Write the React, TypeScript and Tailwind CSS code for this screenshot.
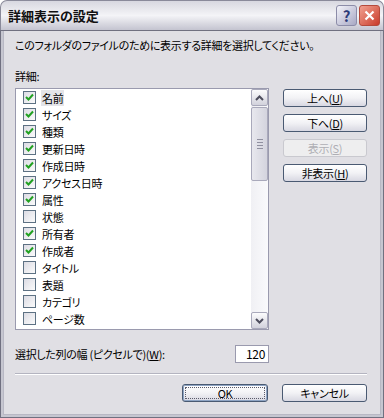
import React from "react";

const items: { label: string; checked: boolean }[] = [
  { label: "名前", checked: true },
  { label: "サイズ", checked: true },
  { label: "種類", checked: true },
  { label: "更新日時", checked: true },
  { label: "作成日時", checked: true },
  { label: "アクセス日時", checked: true },
  { label: "属性", checked: true },
  { label: "状態", checked: false },
  { label: "所有者", checked: true },
  { label: "作成者", checked: true },
  { label: "タイトル", checked: false },
  { label: "表題", checked: false },
  { label: "カテゴリ", checked: false },
  { label: "ページ数", checked: false },
];

function CheckBox({ checked }: { checked: boolean }) {
  return (
    <div className="w-[13px] h-[13px] border border-[#5d7183] bg-gradient-to-br from-[#dcdce4] to-[#fbfbfb] flex items-center justify-center shrink-0">
      {checked && (
        <svg width="9" height="9" viewBox="0 0 9 9">
          <path d="M1 4 L3.5 6.5 L8 1.5" stroke="#21a121" strokeWidth="2" fill="none" />
        </svg>
      )}
    </div>
  );
}

function Arrow({ up }: { up?: boolean }) {
  return (
    <div className="w-[17px] h-[17px] rounded-[2px] border border-[#a9a9bb] bg-gradient-to-b from-[#fcfcfd] to-[#d2d2dc] flex items-center justify-center">
      <svg width="9" height="6" viewBox="0 0 9 6">
        <path
          d={up ? "M1 5 L4.5 1.5 L8 5" : "M1 1 L4.5 4.5 L8 1"}
          stroke="#4d4d5d"
          strokeWidth="2"
          fill="none"
        />
      </svg>
    </div>
  );
}

function XpButton({
  children,
  disabled,
  isDefault,
  className = "",
}: {
  children: React.ReactNode;
  disabled?: boolean;
  isDefault?: boolean;
  className?: string;
}) {
  return (
    <div
      className={`h-[18px] rounded-[3px] border flex ${
        disabled
          ? "border-[#c9c9cf] bg-[#eeeeef] text-[#aeaeb4]"
          : "border-[#4a5a72] bg-gradient-to-b from-[#ffffff] via-[#f2f2f5] to-[#d8d8e2] text-black"
      } ${isDefault ? "shadow-[inset_0_0_0_1px_#8ea4c4]" : ""} ${className}`}
    >
      <div
        className={`flex-1 flex items-center justify-center ${
          isDefault ? "m-[2px] border border-dotted border-[#5a5a6a]" : ""
        }`}
      >
        {children}
      </div>
    </div>
  );
}

export default function App() {
  return (
    <div
      className="w-[384px] h-[418px] flex flex-col text-[11px] tracking-[-0.3px] text-black [font-feature-settings:'palt'] overflow-hidden"
      style={{ fontFamily: '"Noto Sans CJK JP", "Noto Sans", sans-serif' }}
    >
      {/* タイトルバー */}
      <div className="h-[30px] shrink-0 rounded-t-[7px] border border-b-0 border-[#8a8a9a] bg-gradient-to-b from-[#d8d8e0] via-[#f4f4f7] to-[#c4c4d0] flex items-center pl-[7px] pr-[3px]">
        <div className="font-bold text-[13px] tracking-normal text-[#111]">詳細表示の設定</div>
        <div className="ml-auto flex gap-[2px]">
          <div className="w-[21px] h-[21px] rounded-[3px] border border-[#8c8ca8] bg-gradient-to-br from-[#f4f4fa] to-[#a8a8c4] flex items-center justify-center text-[#2b3a78] font-bold text-[15px] leading-none">
            ?
          </div>
          <div className="w-[21px] h-[21px] rounded-[3px] border border-[#b44a3c] bg-gradient-to-br from-[#f0a090] to-[#c8382a] flex items-center justify-center">
            <svg width="11" height="11" viewBox="0 0 11 11">
              <path d="M1.5 1.5 L9.5 9.5 M9.5 1.5 L1.5 9.5" stroke="#fff" strokeWidth="2.2" />
            </svg>
          </div>
        </div>
      </div>

      {/* 本体 */}
      <div className="flex-1 bg-[#e0dfe4] border-x-[3px] border-b-[3px] border-[#c6c6d0] shadow-[inset_0_0_0_1px_#b8b8c4] outline outline-1 outline-[#707080] -outline-offset-1 pl-[12px] pr-[14px] pt-[7px] flex flex-col">
        <div className="leading-[16px]">このフォルダのファイルのために表示する詳細を選択してください。</div>
        <div className="leading-[16px] mt-[15px]">詳細:</div>

        <div className="flex mt-[4px]">
          {/* リスト */}
          <div className="w-[254px] h-[242px] border border-[#9a9aae] bg-white flex">
            <div className="flex-1 flex flex-col">
              {items.map((it, i) => (
                <div key={it.label} className="h-[17px] flex items-center pl-[7px]">
                  <CheckBox checked={it.checked} />
                  <span
                    className={`ml-[5px] px-[1px] leading-[16px] ${
                      i === 0 ? "bg-[#e4e4e8]" : ""
                    }`}
                  >
                    {it.label}
                  </span>
                </div>
              ))}
            </div>
            <div className="w-[17px] flex flex-col bg-gradient-to-r from-[#f0f0f4] to-[#fafafc]">
              <Arrow up />
              <div className="mt-[1px] h-[74px] rounded-[2px] border border-[#a9a9bb] bg-gradient-to-r from-[#e8e8ee] to-[#d4d4de] flex flex-col items-center justify-center gap-[2px]">
                <div className="w-[6px] h-px bg-[#9090a0]" />
                <div className="w-[6px] h-px bg-[#9090a0]" />
                <div className="w-[6px] h-px bg-[#9090a0]" />
                <div className="w-[6px] h-px bg-[#9090a0]" />
              </div>
              <div className="flex-1" />
              <Arrow />
            </div>
          </div>

          {/* 右ボタン */}
          <div className="ml-[14px] w-[84px] flex flex-col gap-[7px] pt-[1px]">
            <XpButton>
              上へ(<span className="underline">U</span>)
            </XpButton>
            <XpButton>
              下へ(<span className="underline">D</span>)
            </XpButton>
            <XpButton disabled>
              表示(<span className="underline">S</span>)
            </XpButton>
            <XpButton>
              非表示(<span className="underline">H</span>)
            </XpButton>
          </div>
        </div>

        <div className="flex items-center mt-[15px] w-[254px]">
          <span>
            選択した列の幅 (ピクセルで)(<span className="underline">W</span>):
          </span>
          <div className="ml-auto w-[34px] h-[18px] bg-white border border-[#9a9aae] text-right pr-[3px] leading-[16px] text-[12px]">
            120
          </div>
        </div>

        <div className="mt-[10px] border-t border-[#b4b4c0] border-b border-b-white" />

        <div className="flex justify-end gap-[14px] mt-[9px]">
          <XpButton isDefault className="w-[86px]">
            OK
          </XpButton>
          <XpButton className="w-[85px]">キャンセル</XpButton>
        </div>
      </div>
    </div>
  );
}
